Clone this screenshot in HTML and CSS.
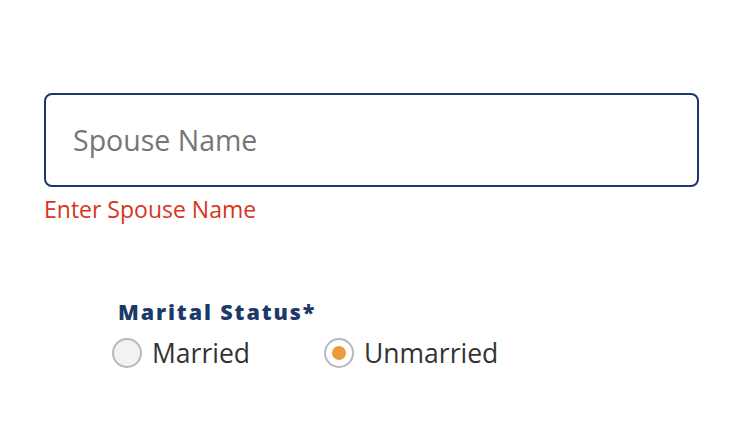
FILE: index.html
```html
<!DOCTYPE html>
<html lang="en">
<head>
<meta charset="utf-8">
<title>Spouse details</title>
<link rel="stylesheet" href="styles.css">
</head>
<body>
<main class="page">
  <div class="field">
    <input class="text-input" type="text" placeholder="Spouse Name">
    <div class="error">Enter Spouse Name</div>
  </div>
  <div class="status">
    <div class="legend">Marital Status*</div>
    <div class="options">
      <label class="option">
        <span class="radio"></span>
        <span class="option-text">Married</span>
      </label>
      <label class="option">
        <span class="radio radio-checked"></span>
        <span class="option-text">Unmarried</span>
      </label>
    </div>
  </div>
</main>
</body>
</html>
```
FILE: styles.css
```css
html, body {
  margin: 0;
  padding: 0;
  background: #ffffff;
}
body {
  font-family: "Open Sans", "Noto Sans", sans-serif;
  width: 738px;
  height: 446px;
  overflow: hidden;
}
.page {
  padding: 93px 39px 0 44px;
}
.field {
  display: flex;
  flex-direction: column;
}
.text-input {
  box-sizing: border-box;
  width: 655px;
  height: 94px;
  margin: 0;
  border: 2px solid #1b3a6a;
  border-radius: 8px;
  padding: 0 0 0 27px;
  font-family: inherit;
  font-size: 28.5px;
  font-weight: 500;
  color: #333333;
  background: #ffffff;
  outline: none;
}
.text-input::placeholder {
  color: #767676;
  opacity: 1;
}
.error {
  margin-top: 7px;
  font-size: 23px;
  font-weight: 500;
  line-height: 30px;
  color: #d5361c;
}
.status {
  margin: 74px 0 0 68px;
}
.legend {
  margin-left: 6px;
  font-size: 21.5px;
  line-height: 28px;
  font-weight: 800;
  letter-spacing: 1.9px;
  color: #1b3a6a;
}
.options {
  display: flex;
  gap: 74px;
  margin-top: 12px;
}
.option {
  display: flex;
  align-items: center;
  gap: 10px;
}
.radio {
  box-sizing: border-box;
  width: 30px;
  height: 30px;
  border-radius: 50%;
  border: 2px solid #b8b8b8;
  background: #f2f2f2;
  display: flex;
  align-items: center;
  justify-content: center;
}
.radio-checked {
  background: #ffffff;
}
.radio-checked::after {
  content: "";
  width: 14px;
  height: 14px;
  border-radius: 50%;
  background: #ed9a3d;
}
.option-text {
  font-size: 26.5px;
  font-weight: 500;
  line-height: 30px;
  color: #333333;
}
```
